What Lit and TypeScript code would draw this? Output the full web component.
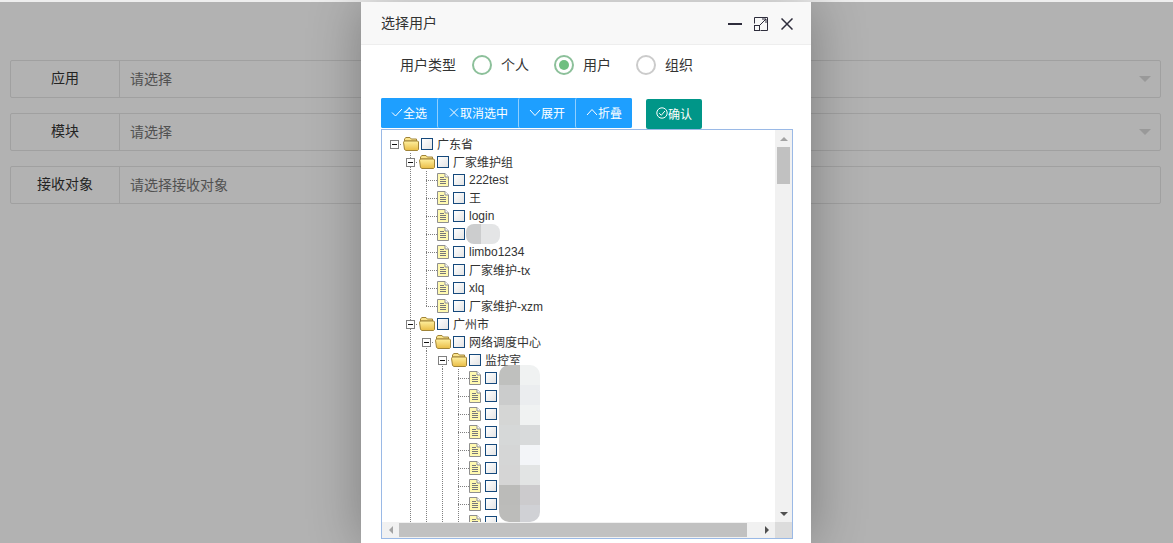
import { LitElement, html, css, svg, nothing } from 'lit';
import { customElement } from 'lit/decorators.js';

type Row = { level: number; label?: string; folder?: boolean; last?: boolean };

const ROWS: Row[] = [
  { level: 0, label: '广东省', folder: true },
  { level: 1, label: '厂家维护组', folder: true },
  { level: 2, label: '222test' },
  { level: 2, label: '王' },
  { level: 2, label: 'login' },
  { level: 2 },
  { level: 2, label: 'limbo1234' },
  { level: 2, label: '厂家维护-tx' },
  { level: 2, label: 'xlq' },
  { level: 2, label: '厂家维护-xzm', last: true },
  { level: 1, label: '广州市', folder: true },
  { level: 2, label: '网络调度中心', folder: true },
  { level: 3, label: '监控室', folder: true },
  ...Array.from({ length: 9 }, () => ({ level: 4 })),
];

// mosaic over the hidden names: [left, right] colour per 20px band
const MOSAIC = [
  ['#bfc0be', '#f0f2f2'],
  ['#cbcccc', '#ebedef'],
  ['#d5d6d5', '#f0f2f2'],
  ['#d6d8d8', '#d8dadb'],
  ['#d5d6d6', '#f3f5f8'],
  ['#d5d5d5', '#e2e4e4'],
  ['#bbbbb9', '#cccbcd'],
  ['#bcbcba', '#d0d1d5'],
];

const check = svg`<path d="M1 6.5 4.5 10 11 3" />`;
const cross = svg`<path d="M2 2.5 10 10.5M10 2.5 2 10.5" />`;
const down = svg`<path d="M1 4 6 9.5 11 4" />`;
const up = svg`<path d="M1 9 6 3.5 11 9" />`;
const circleCheck = svg`<circle cx="6" cy="6" r="5.2" /><path d="M3.2 6.2 5.3 8.3 8.9 4" />`;

const folderIcon = html`<svg class="folder" width="16" height="14" viewBox="0 0 16 14">
  <defs>
    <linearGradient id="fold" x1="0" y1="0" x2="0" y2="1">
      <stop offset="0" stop-color="#fff0a0" />
      <stop offset="1" stop-color="#e9bd45" />
    </linearGradient>
  </defs>
  <path d="M1.5 3V1.8L3 .5h4L8.3 2H13.5V4H1.5Z" fill="#fbe48c" stroke="#a08438" />
  <path d="M.5 5.2 1.5 4H14.8L15.5 5V12.5L14.5 13.5H3L1.5 12.5Z" fill="url(#fold)" stroke="#a08438" />
</svg>`;

const fileIcon = html`<svg class="file" width="12" height="14" viewBox="0 0 12 14">
  <path d="M.5.5H8L11.5 4V13.5H.5Z" fill="#fff9b0" stroke="#8f8f8f" />
  <path d="M8 .5V4H11.5" fill="#fff" stroke="#8f8f8f" />
  <path d="M3 4.5H7M3 6.5H9M3 8.5H9M3 10.5H9" stroke="#77777a" />
</svg>`;

@customElement('app-root')
export class AppRoot extends LitElement {
  static styles = css`
    :host {
      display: block;
      position: relative;
      height: 543px;
      overflow: hidden;
      font-family: 'Liberation Sans', 'Noto Sans CJK SC', sans-serif;
      font-size: 14px;
      color: #333;
      background: #fff;
    }
    .page {
      border-top: 2px solid #eee;
      padding: 58px 12px 0 10px;
      display: flex;
      flex-direction: column;
      gap: 15px;
    }
    .field {
      display: flex;
      height: 38px;
      border: 1px solid #e6e6e6;
      border-radius: 2px;
      box-sizing: border-box;
    }
    .field-label {
      width: 108px;
      border-right: 1px solid #e6e6e6;
      text-align: center;
      line-height: 34px;
    }
    .field-input {
      flex: 1;
      display: flex;
      justify-content: space-between;
      align-items: center;
      padding: 0 9px 0 10px;
      color: #757575;
    }
    .field-input span:first-child {
      margin-top: -2px;
    }
    .caret {
      width: 0;
      height: 0;
      border: 6px solid transparent;
      border-top-color: #dbdbdb;
      border-bottom-width: 0;
    }
    .shade {
      position: absolute;
      inset: 2px 0 0 0;
      background: rgba(0, 0, 0, 0.3);
    }
    .dialog {
      position: absolute;
      top: 2px;
      left: 361px;
      width: 450px;
      height: 541px;
      background: #fff;
      box-shadow: 1px 1px 50px rgba(0, 0, 0, 0.3);
    }
    .head {
      height: 42px;
      background: #f8f8f8;
      border-bottom: 1px solid #eee;
      display: flex;
      align-items: center;
      justify-content: space-between;
      padding: 0 18px 0 20px;
    }
    .title {
      margin-top: -3px;
    }
    .win-btns {
      display: flex;
      align-items: center;
      gap: 12px;
      margin-top: 2px;
    }
    .win-btns svg {
      display: block;
      fill: none;
      stroke: #2e2d3c;
    }
    .win-btns .close {
      margin-left: 1px;
    }
    .types {
      height: 40px;
      display: flex;
      align-items: center;
      padding-left: 39px;
    }
    .types-label {
      width: 72px;
      margin-top: -2px;
    }
    .radio {
      display: flex;
      align-items: center;
      gap: 9px;
      width: 82px;
    }
    .radio span:last-child {
      margin-top: -2px;
    }
    .dot {
      box-sizing: border-box;
      width: 20px;
      height: 20px;
      margin-top: -1px;
      border-radius: 50%;
      border: 2px solid #8cc09a;
      display: flex;
      align-items: center;
      justify-content: center;
    }
    .dot.off {
      border-color: #cbcbcb;
    }
    .dot i {
      width: 10px;
      height: 10px;
      border-radius: 50%;
      background: #6fbf80;
    }
    .tools {
      display: flex;
      align-items: flex-start;
      margin: 13px 0 0 20px;
      height: 31px;
    }
    .group {
      display: flex;
      height: 30px;
      background: #1e9fff;
      border-radius: 2px;
      margin-right: 14px;
    }
    .btn {
      display: flex;
      align-items: center;
      padding: 0 10px 2px;
      font-size: 12px;
      color: #fff;
      background: #1e9fff;
      border-radius: 2px;
      box-sizing: border-box;
    }
    .group .btn + .btn {
      border-left: 1px solid rgba(255, 255, 255, 0.5);
    }
    .btn svg {
      display: block;
      fill: none;
      stroke: #fff;
    }
    .btn.ok {
      height: 30px;
      margin-top: 1px;
      background: #009688;
    }
    .tree {
      margin-left: 20px;
      width: 412px;
      height: 410px;
      box-sizing: border-box;
      border: 1px solid #9ab9e6;
      display: grid;
      grid-template-columns: 1fr 17px;
      grid-template-rows: 1fr 16px;
    }
    .view {
      position: relative;
      overflow: hidden;
      padding: 5px 0 0 4px;
      font-size: 12px;
    }
    .row {
      display: flex;
      height: 18px;
      align-items: center;
      white-space: nowrap;
    }
    .text {
      margin-top: -1px;
    }
    .cell {
      flex: none;
      width: 16px;
      height: 18px;
      display: flex;
      align-items: center;
      justify-content: center;
      background-repeat: no-repeat;
    }
    .v {
      background-image: repeating-linear-gradient(#808080 0 1px, transparent 1px 2px);
      background-size: 1px 100%;
      background-position: 8px 0;
    }
    .h {
      background-image: repeating-linear-gradient(#808080 0 1px, transparent 1px 2px),
        repeating-linear-gradient(90deg, #808080 0 1px, transparent 1px 2px);
      background-size: 1px 100%, 8px 1px;
      background-position: 8px 0, 8px 9px;
    }
    .h.last {
      background-size: 1px 9px, 8px 1px;
    }
    .h.bare {
      background-image: repeating-linear-gradient(90deg, #808080 0 1px, transparent 1px 2px);
      background-size: 8px 1px;
      background-position: 8px 9px;
    }
    .h.below {
      background-size: 1px 9px, 8px 1px;
      background-position: 8px 9px, 8px 9px;
    }
    .exp {
      box-sizing: border-box;
      width: 9px;
      height: 9px;
      border: 1px solid #808080;
      background: #fff;
      display: flex;
      align-items: center;
      justify-content: center;
    }
    .exp i {
      width: 5px;
      height: 1px;
      background: #111;
    }
    .icon {
      flex: none;
      width: 19px;
      height: 18px;
      display: flex;
      align-items: center;
      background-repeat: no-repeat;
    }
    .icon.leaf {
      background-image: repeating-linear-gradient(90deg, #808080 0 1px, transparent 1px 2px);
      background-size: 3px 1px;
      background-position: 0 9px;
    }
    .folder {
      display: block;
      margin-left: 1px;
    }
    .file {
      display: block;
      margin-left: 3px;
    }
    .box {
      flex: none;
      box-sizing: border-box;
      width: 12px;
      height: 12px;
      margin-right: 4px;
      border: 1px solid #15497c;
      background: linear-gradient(135deg, #fff, #e4e4e4);
    }
    .blob {
      position: absolute;
      display: grid;
      grid-template-columns: 1fr 1fr;
      overflow: hidden;
    }
    .blob.small {
      left: 84px;
      top: 94px;
      width: 34px;
      height: 20px;
      border-radius: 8px;
      grid-template-columns: 15px 19px;
    }
    .blob.big {
      left: 117px;
      top: 235px;
      width: 41px;
      height: 157px;
      border-radius: 10px;
      grid-auto-rows: 20px;
    }
    .vbar {
      background: #f1f1f1;
      display: flex;
      flex-direction: column;
      align-items: center;
    }
    .hbar {
      background: #f1f1f1;
      display: flex;
      align-items: center;
    }
    .corner {
      background: #dcdcdc;
    }
    .thumb-v {
      width: 13px;
      height: 37px;
      background: #c1c1c1;
    }
    .thumb-h {
      width: 348px;
      height: 14px;
      background: #c1c1c1;
    }
    .arrow-cell {
      flex: none;
      width: 17px;
      height: 17px;
      display: flex;
      align-items: center;
      justify-content: center;
    }
    .arrow-cell.end {
      margin-top: auto;
    }
    .hbar .arrow-cell.end {
      margin: 0 0 0 auto;
    }
    .tri-up,
    .tri-down {
      width: 0;
      height: 0;
      border-left: 4px solid transparent;
      border-right: 4px solid transparent;
    }
    .tri-up {
      border-bottom: 4px solid #a3a3a3;
    }
    .tri-down {
      border-top: 4px solid #505050;
    }
    .tri-left,
    .tri-right {
      width: 0;
      height: 0;
      border-top: 4px solid transparent;
      border-bottom: 4px solid transparent;
    }
    .tri-left {
      border-right: 4px solid #a3a3a3;
    }
    .tri-right {
      border-left: 4px solid #505050;
    }
  `;

  private field(label: string, hint: string, caret: boolean) {
    return html`<div class="field">
      <div class="field-label">${label}</div>
      <div class="field-input">
        <span>${hint}</span>
        ${caret ? html`<span class="caret"></span>` : nothing}
      </div>
    </div>`;
  }

  private radio(label: string, on: boolean, off = false) {
    return html`<div class="radio">
      <span class="dot ${off ? 'off' : ''}">${on ? html`<i></i>` : nothing}</span>
      <span>${label}</span>
    </div>`;
  }

  private btn(icon: unknown, label: string, extra = '') {
    return html`<div class="btn ${extra}">
      <svg width="12" height="12" viewBox="0 0 12 12">${icon}</svg>${label}
    </div>`;
  }

  private switchClass(r: Row) {
    if (!r.folder) return r.last ? 'h last' : 'h';
    if (r.level === 0) return 'h bare';
    return r.level === 1 ? 'h' : 'h below';
  }

  private row(r: Row) {
    // the 394 column never has a line, every column after it does
    const guides = Array.from({ length: r.level }, (_, i) => i);
    return html`<div class="row">
      ${r.level === 0 ? nothing : guides.map((i) => html`<span class="cell ${i === 0 ? '' : 'v'}"></span>`)}
      <span class="cell ${this.switchClass(r)}">
        ${r.folder ? html`<span class="exp"><i></i></span>` : nothing}
      </span>
      <span class="icon ${r.folder ? '' : 'leaf'}">${r.folder ? folderIcon : fileIcon}</span>
      <span class="box"></span>
      <span class="text">${r.label ?? ''}</span>
    </div>`;
  }

  render() {
    return html`
      <div class="page">
        ${this.field('应用', '请选择', true)}
        ${this.field('模块', '请选择', true)}
        ${this.field('接收对象', '请选择接收对象', false)}
      </div>
      <div class="shade"></div>
      <div class="dialog">
        <div class="head">
          <span class="title">选择用户</span>
          <div class="win-btns">
            <svg width="14" height="14" viewBox="0 0 14 14"><path d="M0 7H14" stroke-width="2" /></svg>
            <svg width="14" height="14" viewBox="0 0 14 14">
              <path d="M.5 6.5V.5H13.5V13.5H6.5" />
              <rect x=".5" y="8.5" width="5" height="5" />
              <path d="M6 8 12 2M8 2H12V6" />
            </svg>
            <svg class="close" width="12" height="12" viewBox="0 0 12 12"><path d="M.5.5 11.5 11.5M11.5.5 .5 11.5" stroke-width="1.5" /></svg>
          </div>
        </div>
        <div class="types">
          <span class="types-label">用户类型</span>
          ${this.radio('个人', false)}
          ${this.radio('用户', true)}
          ${this.radio('组织', false, true)}
        </div>
        <div class="tools">
          <div class="group">
            ${this.btn(check, '全选')}
            ${this.btn(cross, '取消选中')}
            ${this.btn(down, '展开')}
            ${this.btn(up, '折叠')}
          </div>
          ${this.btn(circleCheck, '确认', 'ok')}
        </div>
        <div class="tree">
          <div class="view">
            ${ROWS.map((r) => this.row(r))}
            <div class="blob small">
              <span style="background:#cccdce"></span><span style="background:#e4e5e6"></span>
            </div>
            <div class="blob big">
              ${MOSAIC.map(
                ([l, r]) => html`<span style="background:${l}"></span><span style="background:${r}"></span>`,
              )}
            </div>
          </div>
          <div class="vbar">
            <span class="arrow-cell"><i class="tri-up"></i></span>
            <span class="thumb-v"></span>
            <span class="arrow-cell end"><i class="tri-down"></i></span>
          </div>
          <div class="hbar">
            <span class="arrow-cell"><i class="tri-left"></i></span>
            <span class="thumb-h"></span>
            <span class="arrow-cell end"><i class="tri-right"></i></span>
          </div>
          <div class="corner"></div>
        </div>
      </div>
    `;
  }
}
